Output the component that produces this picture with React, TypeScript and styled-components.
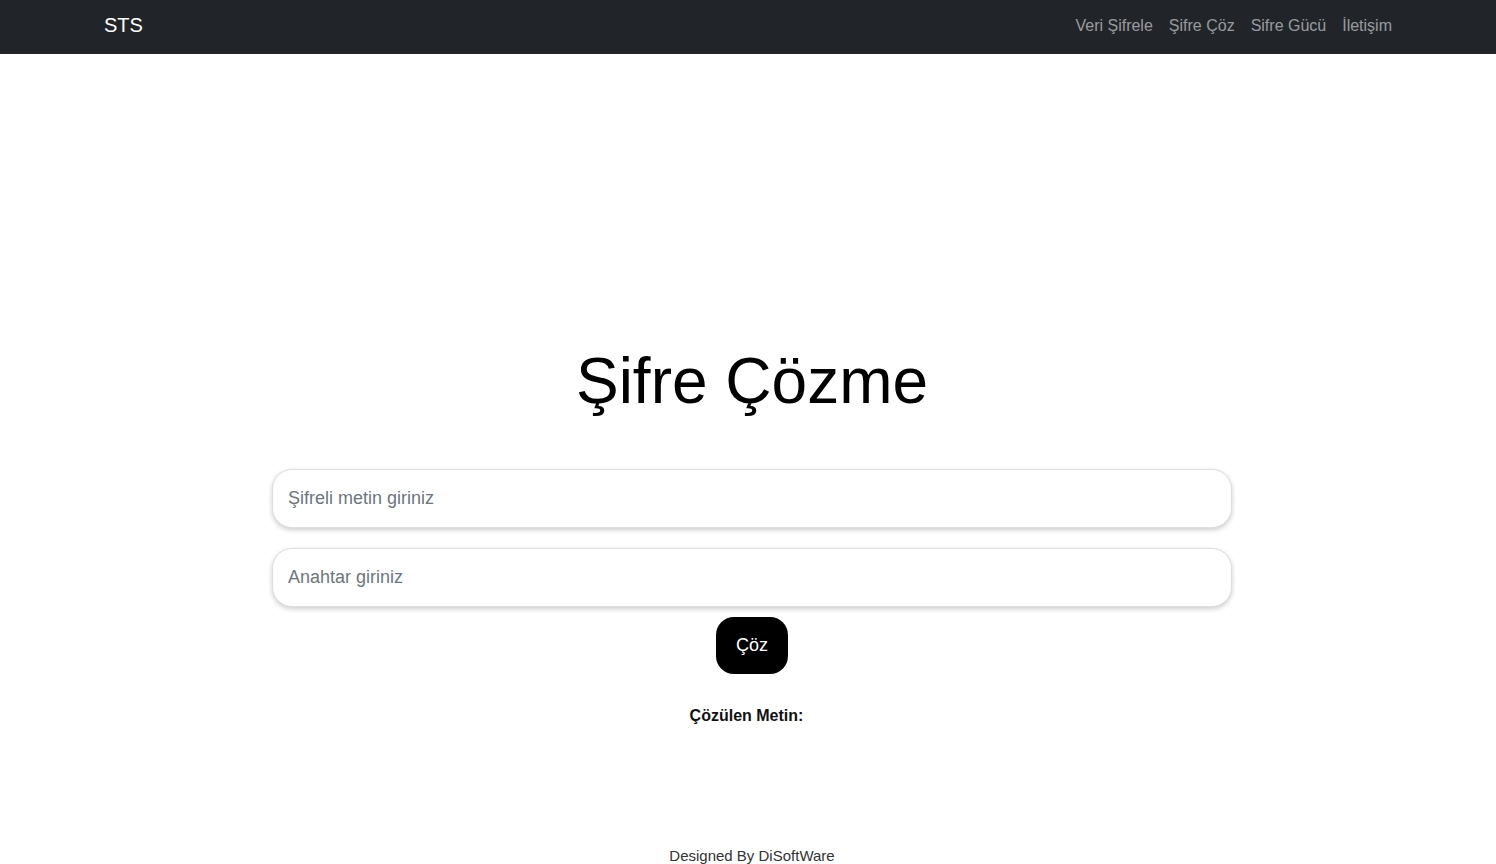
import React from "react";
import styled, { createGlobalStyle } from "styled-components";

const Global = createGlobalStyle`
  html, body { margin: 0; padding: 0; overflow: hidden; }
  body {
    font-family: "Liberation Sans", Arial, sans-serif;
    background: #fff;
    color: #000;
  }
  * { box-sizing: border-box; }
`;

const Page = styled.div`
  display: flex;
  flex-direction: column;
  height: 864px;
`;

const NavBar = styled.nav`
  height: 54px;
  background: #212529;
  display: flex;
  align-items: center;
  justify-content: space-between;
  padding: 0 104px;
  flex-shrink: 0;
`;

const Brand = styled.a`
  color: #fff;
  font-size: 20px;
  text-decoration: none;
  line-height: 1;
  margin-bottom: 4px;
`;

const NavLinks = styled.ul`
  display: flex;
  gap: 16px;
  list-style: none;
  margin: 0 0 2px;
  padding: 0;
`;

const NavLink = styled.a`
  color: rgba(255, 255, 255, 0.55);
  font-size: 16px;
  text-decoration: none;
`;

const Main = styled.main`
  flex: 1;
  display: flex;
  flex-direction: column;
  align-items: center;
  padding-left: 8px;
`;

const Title = styled.h1`
  font-size: 64px;
  font-weight: 400;
  line-height: 77px;
  margin: 289px 0 49px;
`;

const Form = styled.form`
  width: 960px;
  display: flex;
  flex-direction: column;
  align-items: center;
  gap: 20px;
`;

const Field = styled.input`
  width: 100%;
  height: 59px;
  border: 1px solid #dedede;
  border-radius: 20px;
  box-shadow: 0 2px 5px rgba(0, 0, 0, 0.2);
  padding: 0 15px;
  font-family: "Liberation Sans", Arial, sans-serif;
  font-size: 18px;
  outline: none;
  &::placeholder {
    color: #6c757d;
  }
`;

const Button = styled.button`
  margin-top: -10px;
  width: 72px;
  height: 57px;
  border: none;
  border-radius: 18px;
  background: #000;
  color: #fff;
  font-family: "Liberation Sans", Arial, sans-serif;
  font-size: 18px;
  cursor: pointer;
`;

const Result = styled.p`
  margin: 32px 11px 0 0;
  font-size: 16px;
  font-weight: 700;
  line-height: 19px;
  color: #111;
`;

const Footer = styled.footer`
  margin-top: auto;
  text-align: center;
  padding-left: 8px;
  font-size: 15px;
  line-height: 17px;
  color: #333;
  height: 17px;
`;

export default function App() {
  return (
    <>
      <Global />
      <Page>
        <NavBar>
          <Brand href="#">STS</Brand>
          <NavLinks>
            <li><NavLink href="#">Veri Şifrele</NavLink></li>
            <li><NavLink href="#">Şifre Çöz</NavLink></li>
            <li><NavLink href="#">Sifre Gücü</NavLink></li>
            <li><NavLink href="#">İletişim</NavLink></li>
          </NavLinks>
        </NavBar>
        <Main>
          <Title>Şifre Çözme</Title>
          <Form onSubmit={(e) => e.preventDefault()}>
            <Field placeholder="Şifreli metin giriniz" />
            <Field placeholder="Anahtar giriniz" />
            <Button type="submit">Çöz</Button>
          </Form>
          <Result>Çözülen Metin:</Result>
        </Main>
        <Footer>Designed By DiSoftWare</Footer>
      </Page>
    </>
  );
}
